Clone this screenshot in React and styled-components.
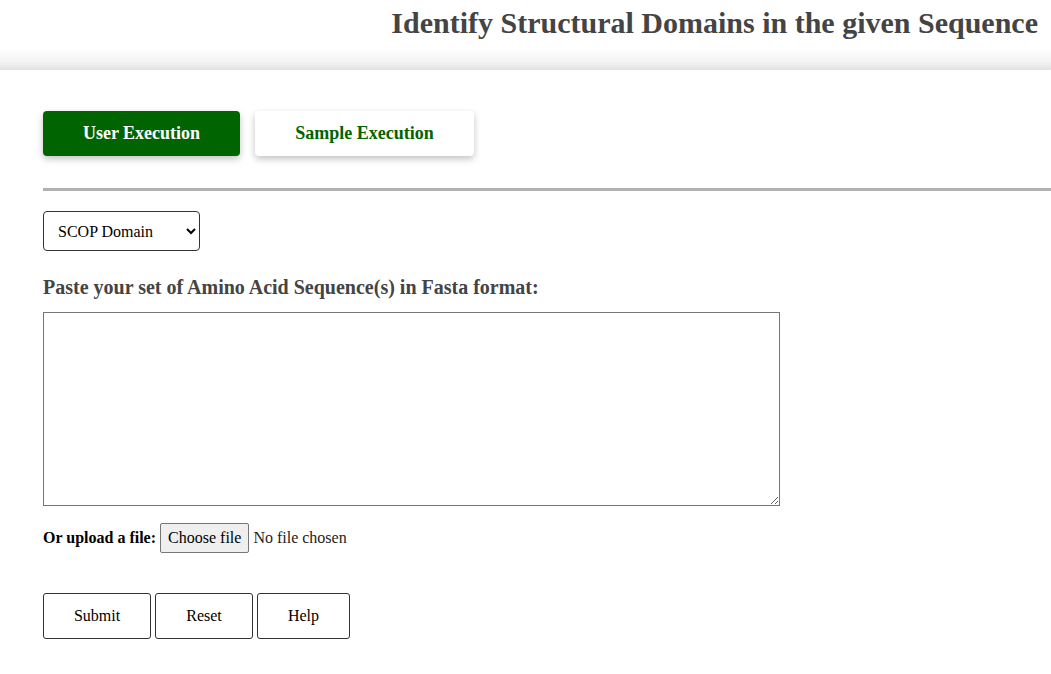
import React from "react";
import styled, { createGlobalStyle } from "styled-components";

const Global = createGlobalStyle`
  html, body { margin: 0; padding: 0; background: #fff; }
  body { font-family: "Liberation Serif", "Times New Roman", serif; color: #000; }
`;

const Header = styled.header`
  height: 70px;
  display: flex;
  justify-content: flex-end;
  align-items: flex-start;
  padding-right: 13px;
  background: linear-gradient(to bottom, #fff 0%, #fff 68%, #f4f4f4 88%, #e2e2e2 100%);
  box-sizing: border-box;
`;

const Title = styled.h1`
  margin: 5px 0 0;
  font-size: 30px;
  line-height: 36px;
  font-weight: bold;
  color: #444;
`;

const Main = styled.main`
  padding: 41px 0 0 43px;
`;

const Tabs = styled.div`
  display: flex;
  gap: 15px;
`;

const Tab = styled.button`
  height: 45px;
  width: ${(p) => p.$w}px;
  border: none;
  border-radius: 4px;
  font-family: inherit;
  font-size: 18px;
  font-weight: bold;
  cursor: pointer;
  background: ${(p) => (p.$active ? "#006400" : "#fff")};
  color: ${(p) => (p.$active ? "#fff" : "#006400")};
  box-shadow: 0 3px 7px rgba(0, 0, 0, 0.24);
`;

const Divider = styled.hr`
  margin: 32px 0 0;
  border: none;
  height: 3px;
  background: #b3b0b0;
`;

const Select = styled.select`
  margin-top: 20px;
  width: 157px;
  height: 40px;
  padding: 0 10px;
  border: 1px solid #333;
  border-radius: 4px;
  background: #fff;
  font-family: inherit;
  font-size: 16px;
  color: #000;
  display: block;
`;

const Label = styled.h3`
  margin: 24px 0 0;
  font-size: 20px;
  line-height: 24px;
  font-weight: bold;
  color: #444;
`;

const TextArea = styled.textarea`
  display: block;
  margin-top: 13px;
  width: 737px;
  height: 194px;
  box-sizing: border-box;
  border: 1px solid #767676;
  font-family: inherit;
  font-size: 16px;
`;

const UploadRow = styled.div`
  display: flex;
  align-items: center;
  margin-top: 17px;
  font-size: 16px;
`;

const UploadLabel = styled.b`
  margin-right: 4px;
`;

const HiddenInput = styled.input`
  display: none;
`;

const FileButton = styled.label`
  display: inline-flex;
  align-items: center;
  height: 30px;
  box-sizing: border-box;
  padding: 0 7px;
  border: 1px solid #767676;
  border-radius: 2px;
  background: #efefef;
  color: #000;
  font-size: 16px;
  cursor: default;
`;

const FileStatus = styled.span`
  margin-left: 4px;
  color: #222;
`;

const Actions = styled.div`
  display: flex;
  gap: 4px;
  margin-top: 40px;
`;

const ActionButton = styled.button`
  width: ${(p) => p.$w}px;
  height: 46px;
  background: #fff;
  border: 1px solid #333;
  border-radius: 3px;
  font-family: inherit;
  font-size: 16px;
  color: #000;
  cursor: pointer;
`;

export default function App() {
  const [fileName, setFileName] = React.useState("");
  return (
    <>
      <Global />
      <Header>
        <Title>Identify Structural Domains in the given Sequence</Title>
      </Header>
      <Main>
        <Tabs>
          <Tab $active $w={197}>User Execution</Tab>
          <Tab $w={219}>Sample Execution</Tab>
        </Tabs>
        <Divider />
        <Select defaultValue="scop">
          <option value="scop">SCOP Domain</option>
          <option value="cath">CATH Domain</option>
        </Select>
        <Label>Paste your set of Amino Acid Sequence(s) in Fasta format:</Label>
        <TextArea />
        <UploadRow>
          <UploadLabel>Or upload a file:</UploadLabel>
          <FileButton>
            Choose file
            <HiddenInput
              type="file"
              onChange={(e) => setFileName(e.target.files?.[0]?.name || "")}
            />
          </FileButton>
          <FileStatus>{fileName || "No file chosen"}</FileStatus>
        </UploadRow>
        <Actions>
          <ActionButton $w={108}>Submit</ActionButton>
          <ActionButton $w={98}>Reset</ActionButton>
          <ActionButton $w={93}>Help</ActionButton>
        </Actions>
      </Main>
    </>
  );
}
